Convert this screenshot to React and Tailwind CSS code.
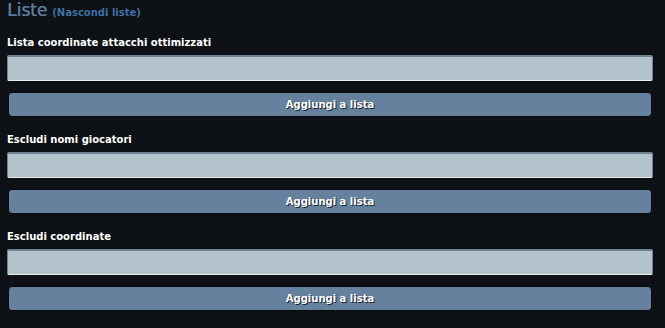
import React from 'react';

const sections = [
  'Lista coordinate attacchi ottimizzati',
  'Escludi nomi giocatori',
  'Escludi coordinate',
];

const ListSection = ({ label }) => (
  <div className="mt-[16px]">
    <div className="text-[10px] leading-[13px] font-bold text-white">{label}</div>
    <input
      type="text"
      className="mt-[6px] block w-[646px] h-[26px] bg-[#b3c3cb] border border-[#6f8392] border-t-2 border-b-[#e6edf0] rounded-[2px] outline-none px-1 text-[11px] text-black"
    />
    <button
      type="button"
      className="mt-[11px] ml-px block w-[644px] h-[25px] bg-[#65819d] border border-[#07090c] rounded-[4px] text-[10px] font-bold text-white [text-shadow:1px_1px_0_#1b2430]"
    >
      Aggiungi a lista
    </button>
  </div>
);

const App = () => {
  return (
    <div className="w-[665px] h-[328px] bg-[#0d1015] px-[7px] overflow-hidden font-['DejaVu_Sans',Verdana,sans-serif]">
      <div className="h-[20px] leading-[20px] whitespace-nowrap">
        <span className="text-[17px] font-normal text-[#5a7b99] [text-shadow:0.5px_0_0_#5a7b99]">Liste</span>{' '}
        <span className="text-[10px] font-bold text-[#3f6fa3]">(Nascondi liste)</span>
      </div>
      {sections.map((s) => (
        <ListSection key={s} label={s} />
      ))}
    </div>
  );
};

export default App;
